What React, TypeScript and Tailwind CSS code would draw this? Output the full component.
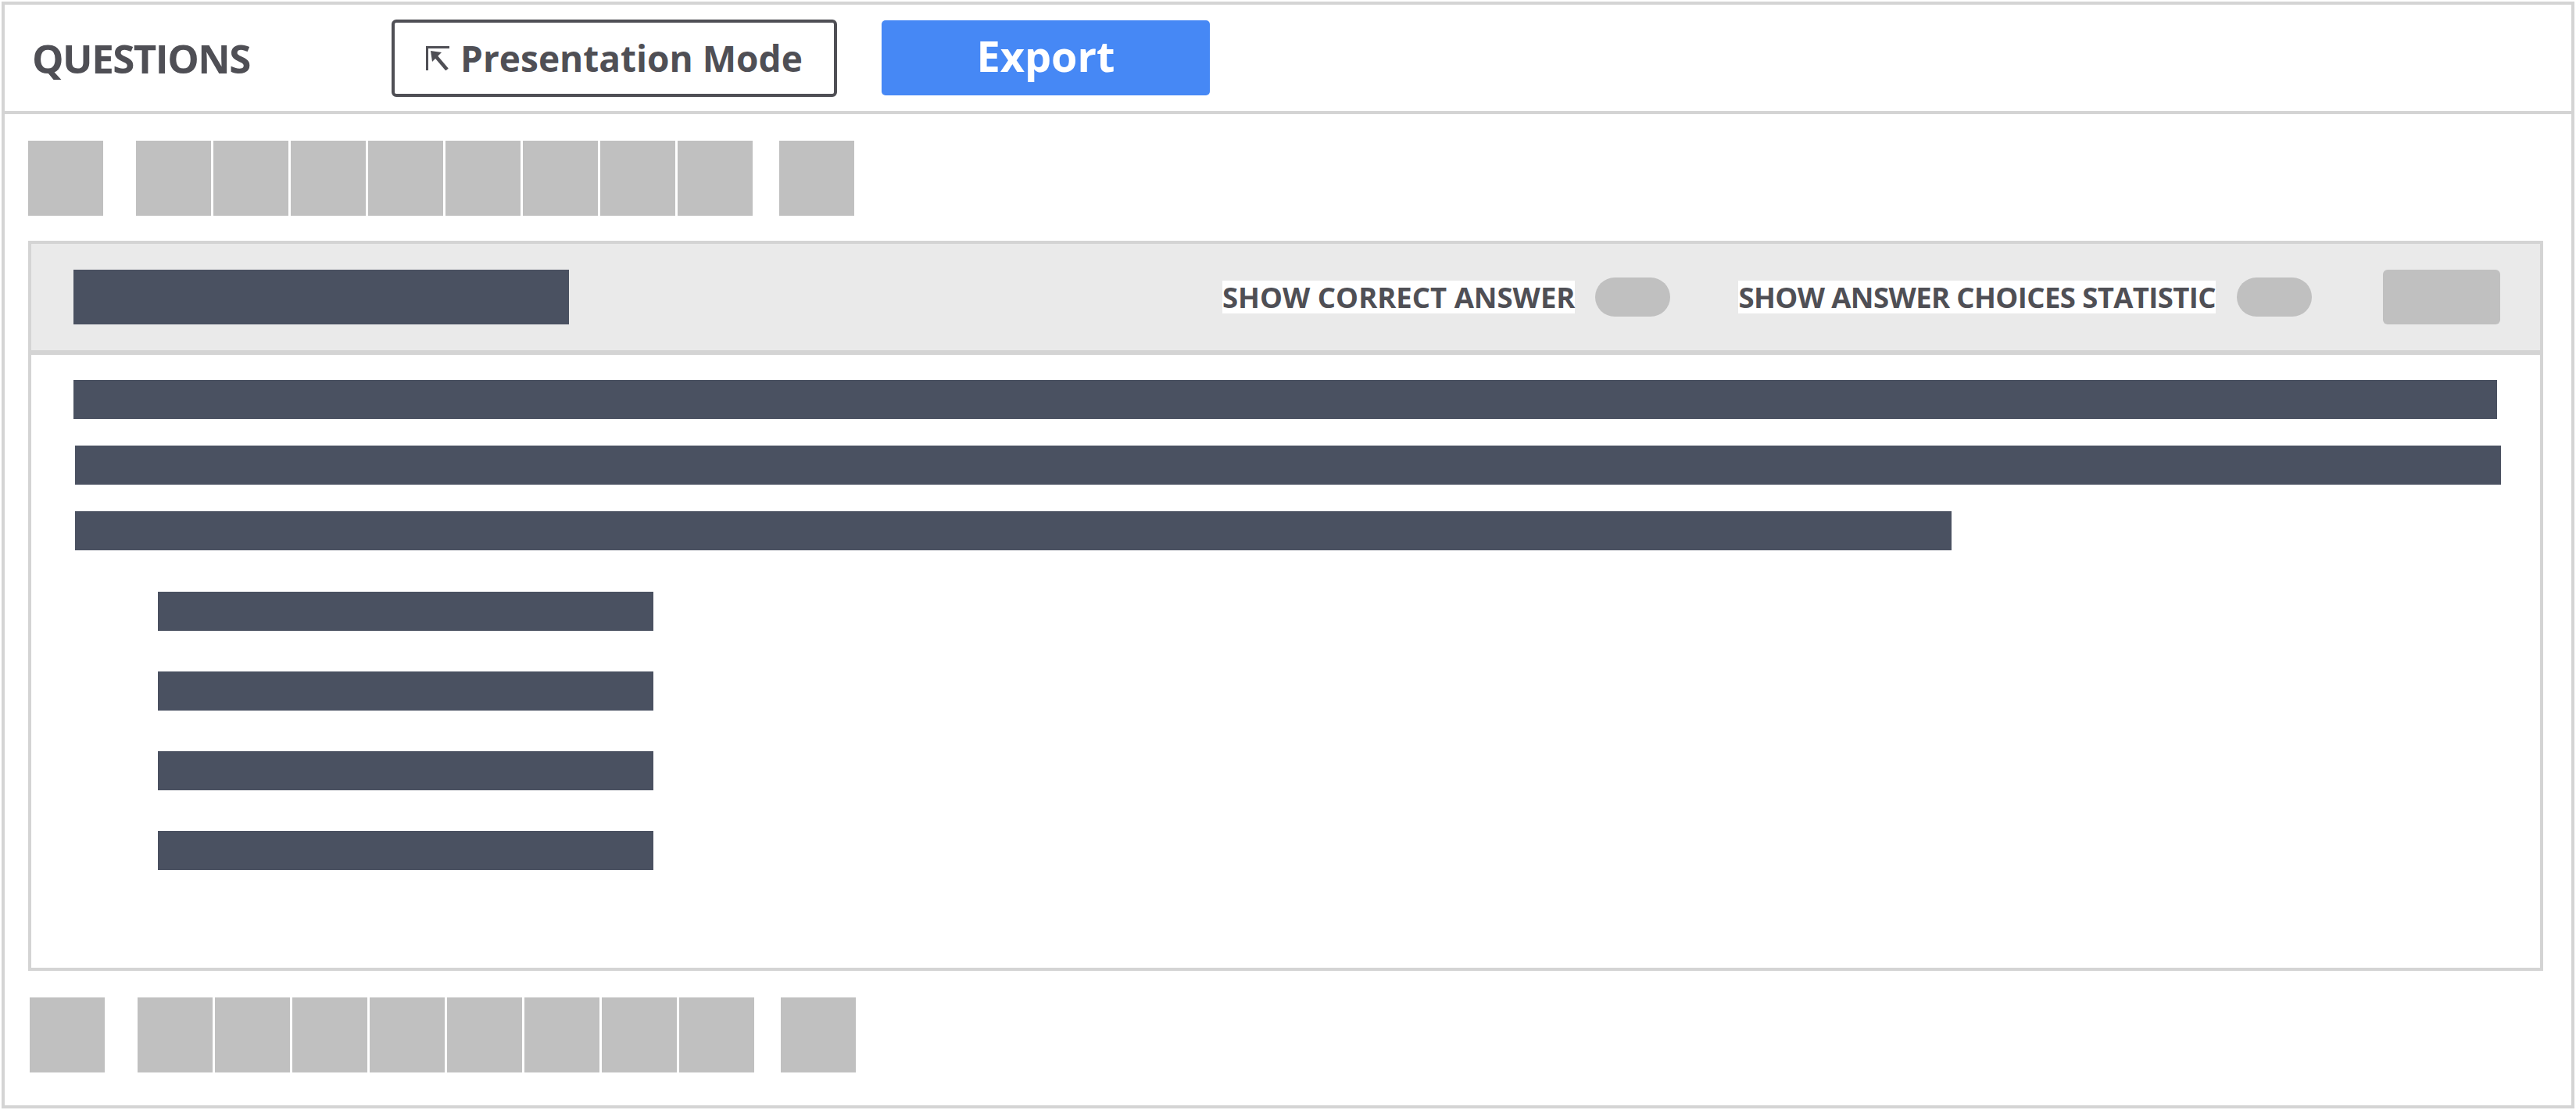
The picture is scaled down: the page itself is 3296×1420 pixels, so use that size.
import React from "react"

const font = { fontFamily: '"Open Sans", "Noto Sans", sans-serif' }

function ExpandIcon() {
  return (
    <svg width="30" height="31" viewBox="0 0 30 31" className="shrink-0">
      <rect x="0" y="0" width="30" height="3" fill="#4f4f55" />
      <rect x="0" y="0" width="3" height="31" fill="#4f4f55" />
      <polygon points="6,6 20,8 8,20" fill="#4f4f55" />
      <line x1="10" y1="10" x2="27" y2="30" stroke="#4f4f55" strokeWidth="4.5" />
    </svg>
  )
}

function NavRow() {
  return (
    <div className="flex h-[96px]">
      <div className="w-[96px] h-full bg-[#c0c0c0]" />
      <div className="ml-[42px] flex gap-[3px]">
        {[0, 1, 2, 3, 4, 5, 6, 7].map((i) => (
          <div key={i} className="w-[96px] h-full bg-[#c0c0c0]" />
        ))}
      </div>
      <div className="ml-[34px] w-[96px] h-full bg-[#c0c0c0]" />
    </div>
  )
}

function Toggle() {
  return <div className="w-[96px] h-[50px] rounded-full bg-[#c0c0c0]" />
}

export default function App() {
  return (
    <div className="w-[3296px] h-[1420px] p-[2px] bg-white" style={font}>
      <div className="h-full border-4 border-[#d4d4d4] flex flex-col">
        {/* top bar */}
        <div className="h-[140px] shrink-0 flex items-center pl-[35px] border-b-4 border-[#d4d4d4]">
          <span className="w-[460px] text-[51px] font-bold text-[#4f4f55] leading-none tracking-[-1.5px]">QUESTIONS</span>
          <button className="w-[570px] h-[99px] border-4 border-[#4f4f55] rounded-[6px] flex items-center justify-center gap-[14px] bg-white">
            <ExpandIcon />
            <span className="text-[46px] font-bold text-[#4f4f55] leading-none">Presentation Mode</span>
          </button>
          <button className="ml-[57px] w-[420px] h-[96px] pb-[6px] rounded-[5px] bg-[#4688f5] flex items-center justify-center">
            <span className="text-[54px] font-bold text-white leading-none">Export</span>
          </button>
        </div>

        <div className="pl-[30px] pt-[34px]">
          <NavRow />
        </div>

        {/* question card */}
        <div className="mt-[32px] ml-[30px] w-[3218px]">
          <div className="h-[144px] border-4 border-[#d4d4d4] bg-[#eaeaea] flex items-center pl-[54px] pr-[51px]">
            <div className="w-[634px] h-[70px] bg-[#4a5161]" />
            <div className="flex-1" />
            <span className="bg-white text-[36.5px] font-bold text-[#4f4f55] leading-[42px]">SHOW CORRECT ANSWER</span>
            <div className="ml-[26px]">
              <Toggle />
            </div>
            <span className="ml-[87px] bg-white text-[36.5px] font-bold text-[#4f4f55] leading-[42px] tracking-[-0.6px]">
              SHOW ANSWER CHOICES STATISTIC
            </span>
            <div className="ml-[27px]">
              <Toggle />
            </div>
            <div className="ml-[91px] w-[150px] h-[70px] rounded-[6px] bg-[#c0c0c0]" />
          </div>
          <div className="h-[790px] border-x-4 border-b-4 border-t-2 border-[#d4d4d4] pl-[54px] pt-[32px]">
            <div className="flex flex-col gap-[34px]">
              <div className="w-[3101px] h-[50px] bg-[#4a5161]" />
              <div className="ml-[2px] w-[3104px] h-[50px] bg-[#4a5161]" />
              <div className="ml-[2px] w-[2401px] h-[50px] bg-[#4a5161]" />
            </div>
            <div className="mt-[53px] ml-[108px] flex flex-col gap-[52px]">
              {[0, 1, 2, 3].map((i) => (
                <div key={i} className="w-[634px] h-[50px] bg-[#4a5161]" />
              ))}
            </div>
          </div>
        </div>

        <div className="pl-[32px] pt-[34px]">
          <NavRow />
        </div>
      </div>
    </div>
  )
}
